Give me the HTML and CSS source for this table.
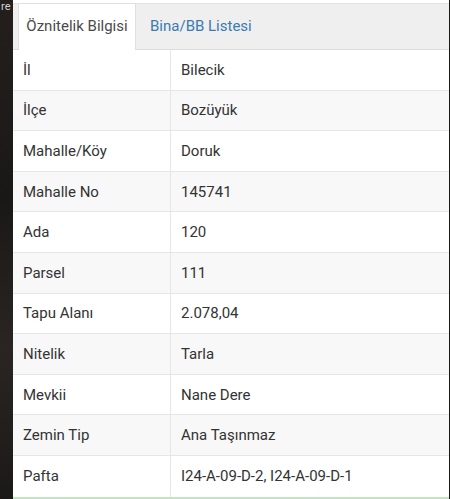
FILE: index.html
```html
<!DOCTYPE html>
<html lang="tr">
<head>
<meta charset="utf-8">
<link rel="stylesheet" href="styles.css">
</head>
<body>
<div class="page">
  <div class="side"><span class="side-text">re</span></div>
  <div class="panel">
    <div class="tabs">
      <div class="tab active">Öznitelik Bilgisi</div>
      <div class="tab link">Bina/BB Listesi</div>
    </div>
    <div class="table">
      <div class="row"><div class="key">İl</div><div class="val">Bilecik</div></div>
      <div class="row alt"><div class="key">İlçe</div><div class="val">Bozüyük</div></div>
      <div class="row"><div class="key">Mahalle/Köy</div><div class="val">Doruk</div></div>
      <div class="row alt"><div class="key">Mahalle No</div><div class="val">145741</div></div>
      <div class="row"><div class="key">Ada</div><div class="val">120</div></div>
      <div class="row alt"><div class="key">Parsel</div><div class="val">111</div></div>
      <div class="row"><div class="key">Tapu Alanı</div><div class="val">2.078,04</div></div>
      <div class="row alt"><div class="key">Nitelik</div><div class="val">Tarla</div></div>
      <div class="row"><div class="key">Mevkii</div><div class="val">Nane Dere</div></div>
      <div class="row alt"><div class="key">Zemin Tip</div><div class="val">Ana Taşınmaz</div></div>
      <div class="row"><div class="key">Pafta</div><div class="val">I24-A-09-D-2, I24-A-09-D-1</div></div>
    </div>
    <div class="footer-line"></div>
  </div>
</div>
</body>
</html>
```
FILE: styles.css
```css
* { box-sizing: border-box; }
html, body { margin: 0; padding: 0; }
body {
  width: 450px;
  height: 499px;
  overflow: hidden;
  background: #1c1a19;
  font-family: Roboto, "Noto Sans", sans-serif;
}
.page {
  display: flex;
  height: 499px;
}
.side {
  width: 13px;
  flex: none;
  background: linear-gradient(180deg, #241f1d 0%, #1a1817 40%, #2a2522 70%, #1b1918 100%);
  overflow: hidden;
}
.side-text {
  display: block;
  color: #d0d0d0;
  font-size: 11px;
  line-height: 12px;
  padding-top: 1px;
  padding-left: 1px;
  white-space: nowrap;
}
.panel {
  width: 436px;
  flex: none;
  background: #ffffff;
  padding-top: 3px;
  display: flex;
  flex-direction: column;
}
.tabs {
  display: flex;
  align-items: flex-end;
  height: 47px;
  background: #efefef;
  border-top: 1px solid #e4e4e4;
  border-bottom: 1px solid #dcdcdc;
  padding-left: 5px;
}
.tab {
  font-size: 15px;
  line-height: 20px;
  padding: 12px 10px 13px;
  white-space: nowrap;
}
.tab.active {
  background: #ffffff;
  color: #4a4a4a;
  border: 1px solid #e0e0e0;
  border-bottom: none;
  margin-bottom: -1px;
  padding: 12px 0 14px;
  height: 47px;
  width: 118px;
  text-align: center;
}
.tab.link {
  color: #3a7bb0;
  padding-left: 14px;
}
.table {
  display: flex;
  flex-direction: column;
}
.row {
  display: grid;
  grid-template-columns: 158px 1fr;
  height: 40.6px;
  border-bottom: 1px solid #e6e6e6;
  background: #ffffff;
}
.row.alt { background: #f8f8f8; }
.row:last-child { border-bottom: none; }
.key, .val {
  display: flex;
  align-items: center;
  font-size: 15px;
  color: #333333;
  padding-left: 10px;
}
.key { border-right: 1px solid #e6e6e6; }
.footer-line {
  height: 3px;
  background: #c4e3c4;
}
```
